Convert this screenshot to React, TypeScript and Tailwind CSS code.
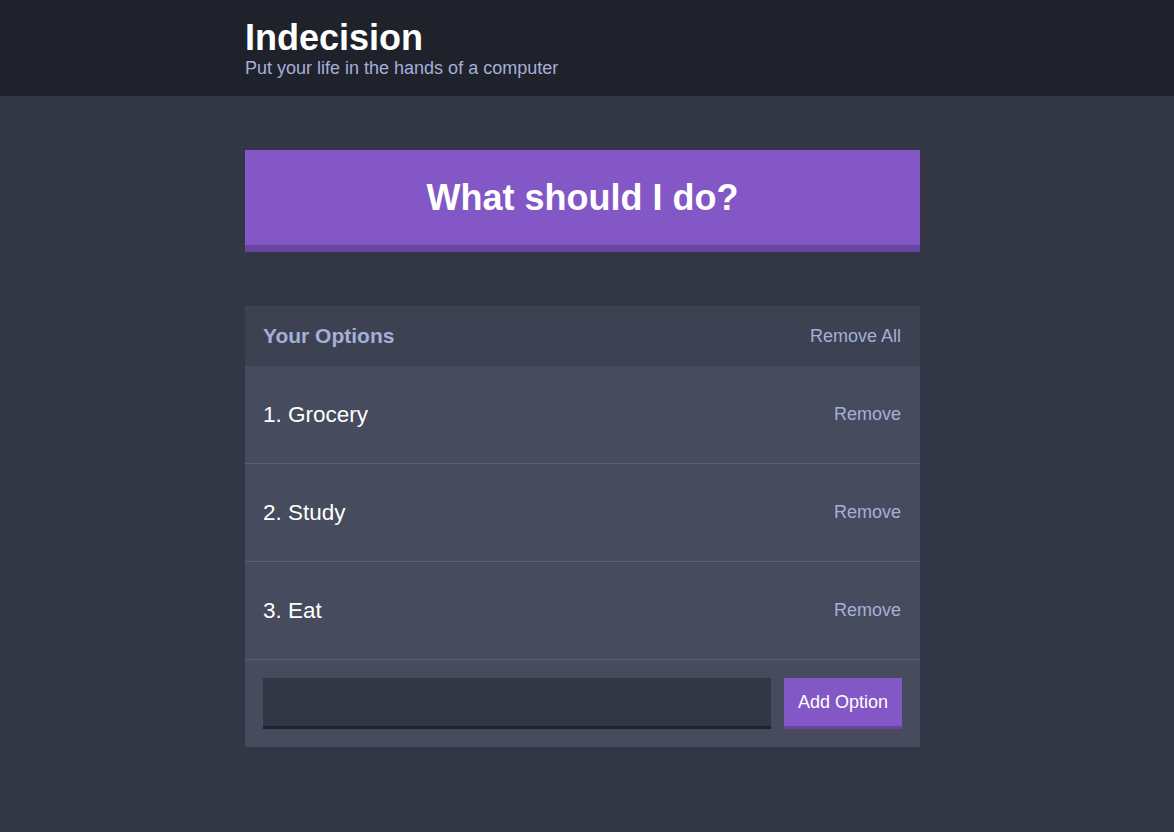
import { useState } from "react";

const font = "font-['Liberation_Sans',Arial,sans-serif]";

export default function App() {
  const [options] = useState(["Grocery", "Study", "Eat"]);

  return (
    <div className={`min-h-[832px] bg-[#333745] ${font}`}>
      <header className="bg-[#20222b] pt-[20px] pb-[19px]">
        <div className="ml-[245px] w-[675px]">
          <h1 className="text-[36px] leading-none font-bold text-white">Indecision</h1>
          <p className="mt-[3px] text-[18px] leading-[18px] text-[#a5afd7]">Put your life in the hands of a computer</p>
        </div>
      </header>

      <main className="ml-[245px] w-[675px] pt-[54px]">
        <button
          type="button"
          className="w-full h-[102px] bg-[#8357c5] border-b-[7px] border-[#6a44a3] text-white text-[36px] font-bold leading-none"
        >
          What should I do?
        </button>

        <section className="mt-[54px] bg-[#464b5e]">
          <div className="h-[60px] bg-[#3c4251] flex items-center justify-between pl-[18px] pr-[19px]">
            <h3 className="text-[21px] font-bold text-[#a5afd7]">Your Options</h3>
            <button type="button" className="text-[18px] text-[#a5afd7]">Remove All</button>
          </div>
          {options.map((opt, i) => (
            <div key={opt} className="h-[98px] flex items-center justify-between pl-[18px] pr-[19px] border-b border-[#596075]">
              <p className="text-[22.5px] text-white">{i + 1}. {opt}</p>
              <button type="button" className="text-[18px] text-[#a5afd7]">Remove</button>
            </div>
          ))}
          <form className="flex gap-[13px] pt-[18px] pb-[18px] pl-[18px] pr-[18px]" onSubmit={(e) => e.preventDefault()}>
            <input className="flex-1 h-[51px] bg-[#333745] border-b-[3px] border-[#20222b] outline-none text-white text-[18px] px-3" />
            <button type="submit" className="w-[118px] h-[51px] bg-[#8357c5] border-b-[3px] border-[#6a44a3] text-white text-[18px]">
              Add Option
            </button>
          </form>
        </section>
      </main>
    </div>
  );
}
